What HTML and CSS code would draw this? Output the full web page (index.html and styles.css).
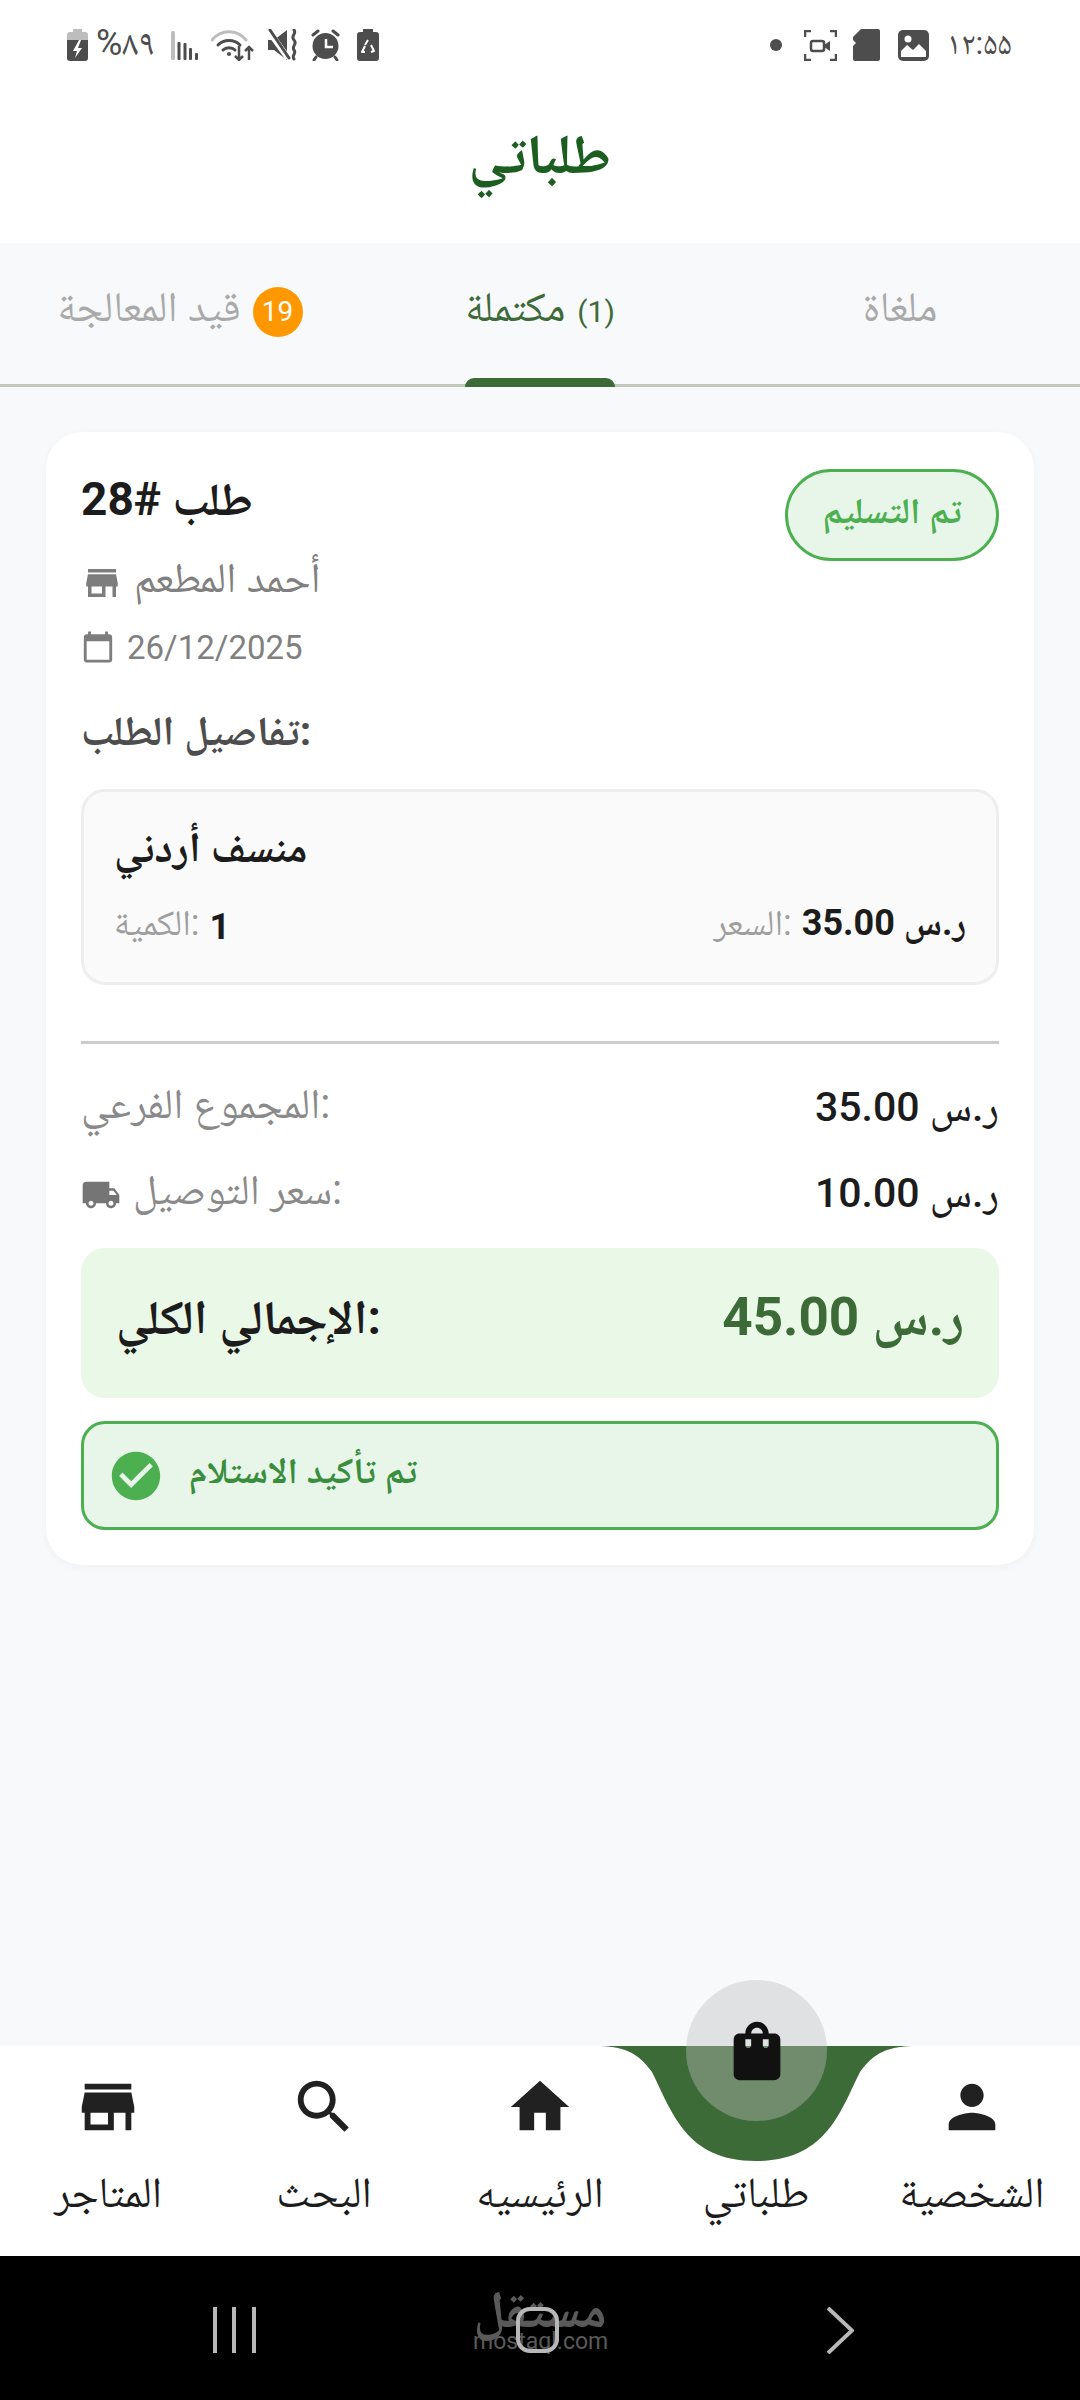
FILE: index.html
```html
<!DOCTYPE html>
<html lang="ar">
<head>
  <meta charset="utf-8">
  <title>طلباتي</title>
  <link rel="stylesheet" href="styles.css">
</head>
<body>
  <div class="page">
    <header class="top">
      <div class="status">
        <div class="status-group">
          <svg class="st-batt" viewBox="0 0 21 32"><path fill="#bdbdbd" d="M6 0h9v3h3a3 3 0 0 1 3 3v6H0V6a3 3 0 0 1 3-3h3z"/><path fill="#4d4d4d" d="M0 11h21v18a3 3 0 0 1-3 3H3a3 3 0 0 1-3-3z"/><path fill="#fff" d="M12 11l-6 11h4l-2 7 7-10h-4l3-8z"/></svg>
          <span class="st-pct">%۸۹</span>
          <svg class="st-signal" viewBox="0 0 27 29"><rect width="4" height="29" rx="1.500" fill="#bdbdbd"/><rect x="6.500" y="11" width="3" height="18" rx="1" fill="#4d4d4d"/><rect x="12.500" y="12" width="3" height="17" rx="1" fill="#4d4d4d"/><rect x="18" y="17" width="3" height="12" rx="1" fill="#4d4d4d"/><rect x="24" y="22" width="3" height="7" rx="1" fill="#4d4d4d"/></svg>
          <svg class="st-wifi" viewBox="0 0 44 32"><path fill="none" stroke="#bdbdbd" stroke-width="3" stroke-linecap="round" d="M1 11C10 0 26 0 35 11"/><path fill="none" stroke="#4d4d4d" stroke-width="3" stroke-linecap="round" d="M7 16c6-6 16-6 22 0M12 21c3-3 9-3 12 0"/><circle cx="18" cy="25" r="2" fill="#4d4d4d"/><path fill="none" stroke="#4d4d4d" stroke-width="2.500" d="M28 17v14M24 27l4 4 4-4M38 31V18M34 22l4-4 4 4"/></svg>
          <svg class="st-mute" viewBox="0 0 30 32"><path fill="#4d4d4d" d="M0 11h6L19 1v30L6 21H0z"/><path stroke="#fff" stroke-width="6" d="M0 1l20 28"/><path stroke="#4d4d4d" stroke-width="3" stroke-linecap="round" d="M2 1l19 28"/><path fill="none" stroke="#4d4d4d" stroke-width="3" stroke-linecap="round" d="M26 1c3 4-4 6 0 10s-3 6 0 10-3 5 0 9"/></svg>
          <svg class="st-alarm" viewBox="0 0 29 32"><circle cx="14.500" cy="17" r="13" fill="#4d4d4d"/><path fill="none" stroke="#fff" stroke-width="2.500" d="M15 10v8h7"/><path stroke="#4d4d4d" stroke-width="3" stroke-linecap="round" d="M2 6l5-4M27 6l-5-4M5 28l-2 3M24 28l2 3"/></svg>
          <svg class="st-saver" viewBox="0 0 22 32"><path fill="#4d4d4d" d="M6 0h10v3h3a3 3 0 0 1 3 3v23a3 3 0 0 1-3 3H3a3 3 0 0 1-3-3V6a3 3 0 0 1 3-3h3z"/><path fill="none" stroke="#fff" stroke-width="2" stroke-linejoin="round" d="M11 11l-3 5M14 16l3 6-3 1M8 23H5l3-6"/></svg>
        </div>
        <div class="status-group status-right">
          <span class="st-dot"></span>
          <svg class="st-frame" viewBox="0 0 33 31"><path fill="none" stroke="#4d4d4d" stroke-width="2.500" d="M1 7V1h6M26 1h6v6M1 24v6h6M26 30h6v-6"/><rect x="7" y="11" width="13" height="10" rx="2" fill="none" stroke="#4d4d4d" stroke-width="2.500"/><path fill="#4d4d4d" d="M20 15l6-4v10l-6-4z"/></svg>
          <svg class="st-sd" viewBox="0 0 27 32"><path fill="#4d4d4d" d="M8 0h17a2 2 0 0 1 2 2v28a2 2 0 0 1-2 2H2a2 2 0 0 1-2-2V17l3-3-3-3V8z"/></svg>
          <svg class="st-pic" viewBox="0 0 31 31"><rect width="31" height="31" rx="5" fill="#4d4d4d"/><circle cx="10" cy="9" r="3.500" fill="#fff"/><path fill="#fff" d="M3 27v-6l6-6 6 5 6-6 7 7v6z"/></svg>
          <span class="st-time">۱۲:۵۵</span>
        </div>
      </div>
      <h1 class="title">طلباتي</h1>
    </header>

    <nav class="tabs">
      <div class="tab">
        <span>قيد المعالجة</span>
        <span class="tab-badge">19</span>
      </div>
      <div class="tab tab-active">
        <span>مكتملة</span>
        <span class="tab-count">(1)</span>
      </div>
      <div class="tab">
        <span>ملغاة</span>
      </div>
    </nav>

    <main class="content">
      <section class="card">
        <div class="order-head">
          <div>
            <div class="order-no">28# طلب</div>
            <div class="meta meta-store">
              <svg class="icon-store" viewBox="0 0 24 24"><path d="M20 4H4v2h16V4zm1 10v-2l-1-5H4l-1 5v2h1v6h10v-6h4v6h2v-6h1zm-9 4H6v-4h6v4z"/></svg>
              <span>أحمد المطعم</span>
            </div>
            <div class="meta meta-date">
              <svg class="icon-date" viewBox="0 0 24 24"><path d="M20 3h-1V1h-2v2H7V1H5v2H4c-1.100 0-2 .9-2 2v16c0 1.100.9 2 2 2h16c1.100 0 2-.9 2-2V5c0-1.100-.9-2-2-2zm0 18H4V8h16v13z"/></svg>
              <span>26/12/2025</span>
            </div>
          </div>
          <div class="status-badge">تم التسليم</div>
        </div>

        <h2 class="details-title">تفاصيل الطلب:</h2>

        <div class="item">
          <div class="item-name">منسف أردني</div>
          <div class="item-row">
            <div class="item-cell">
              <span class="item-label">الكمية:</span>
              <span class="item-value">1</span>
            </div>
            <div class="item-cell">
              <span class="item-label">السعر:</span>
              <span class="item-value">35.00 ر.س</span>
            </div>
          </div>
        </div>

        <div class="divider"></div>

        <div class="sum-row">
          <span class="sum-label">المجموع الفرعي:</span>
          <span class="sum-value">35.00 ر.س</span>
        </div>
        <div class="sum-row sum-delivery">
          <span class="sum-label sum-with-icon">
            <svg class="icon-truck" viewBox="0 0 24 24"><path d="M20 8h-3V4H3c-1.100 0-2 .9-2 2v11h2c0 1.660 1.340 3 3 3s3-1.340 3-3h6c0 1.660 1.340 3 3 3s3-1.340 3-3h2v-5l-3-4zM6 18.500c-.83 0-1.500-.67-1.500-1.500s.67-1.500 1.500-1.500 1.500.67 1.500 1.500-.67 1.500-1.500 1.500zm13.500-9l1.960 2.500H17V9.500h2.500zm-1.500 9c-.83 0-1.500-.67-1.500-1.500s.67-1.500 1.500-1.500 1.500.67 1.500 1.500-.67 1.500-1.500 1.500z"/></svg>
            <span>سعر التوصيل:</span>
          </span>
          <span class="sum-value">10.00 ر.س</span>
        </div>

        <div class="total">
          <span class="total-label">الإجمالي الكلي:</span>
          <span class="total-value">45.00 ر.س</span>
        </div>

        <div class="confirm">
          <svg class="icon-check" viewBox="0 0 24 24"><path d="M12 2C6.480 2 2 6.480 2 12s4.480 10 10 10 10-4.480 10-10S17.520 2 12 2zm-2 15l-5-5 1.410-1.410L10 14.170l7.590-7.590L19 8l-9 9z"/></svg>
          <span>تم تأكيد الاستلام</span>
        </div>
      </section>
    </main>

    <footer class="bottom-nav">
      <div class="nav-item">
        <svg class="nav-icon" viewBox="0 0 24 24"><path d="M20 4H4v2h16V4zm1 10v-2l-1-5H4l-1 5v2h1v6h10v-6h4v6h2v-6h1zm-9 4H6v-4h6v4z"/></svg>
        <span class="nav-label">المتاجر</span>
      </div>
      <div class="nav-item">
        <svg class="nav-icon" viewBox="0 0 24 24"><path d="M15.500 14h-.79l-.28-.27C15.410 12.590 16 11.110 16 9.500 16 5.910 13.090 3 9.500 3S3 5.910 3 9.500 5.910 16 9.500 16c1.610 0 3.090-.59 4.230-1.570l.27.28v.79l5 4.990L20.490 19l-4.990-5zm-6 0C7.010 14 5 11.990 5 9.500S7.010 5 9.500 5 14 7.010 14 9.500 11.990 14 9.500 14z"/></svg>
        <span class="nav-label">البحث</span>
      </div>
      <div class="nav-item">
        <svg class="nav-icon" viewBox="0 0 24 24"><path d="M10 20v-6h4v6h5v-8h3L12 3 2 12h3v8z"/></svg>
        <span class="nav-label">الرئيسيه</span>
      </div>
      <div class="nav-item nav-active">
        <svg class="nav-curve" viewBox="0 0 320 115"><path d="M0 0C26 0 42 6 56 26C76 66 90 115 160 115C230 115 244 66 264 26C278 6 294 0 320 0Z"/></svg>
        <div class="nav-bubble">
          <svg class="nav-icon" viewBox="0 0 24 24"><path d="M18 6h-2c0-2.210-1.790-4-4-4S8 3.790 8 6H6c-1.100 0-2 .9-2 2v12c0 1.100.9 2 2 2h12c1.100 0 2-.9 2-2V8c0-1.100-.9-2-2-2zm-8 4c0 .55-.45 1-1 1s-1-.45-1-1V8h2v2zm2-6c1.100 0 2 .9 2 2h-4c0-1.100.9-2 2-2zm4 6c0 .55-.45 1-1 1s-1-.45-1-1V8h2v2z"/></svg>
        </div>
        <span class="nav-label">طلباتي</span>
      </div>
      <div class="nav-item">
        <svg class="nav-icon" viewBox="0 0 24 24"><path d="M12 12c2.210 0 4-1.790 4-4s-1.790-4-4-4-4 1.790-4 4 1.790 4 4 4zm0 2c-2.670 0-8 1.340-8 4v2h16v-2c0-2.660-5.330-4-8-4z"/></svg>
        <span class="nav-label">الشخصية</span>
      </div>
    </footer>

    <div class="system-bar">
      <div class="watermark">
        <div class="wm-ar">مستقل</div>
        <div class="wm-en">mostaql.com</div>
      </div>
      <div class="sys-cell">
        <svg class="sys-recents" viewBox="0 0 43 46"><path stroke="#b8b8b8" stroke-width="4" d="M2 0v46M21 0v46M41 0v46"/></svg>
      </div>
      <div class="sys-cell">
        <div class="sys-home"></div>
      </div>
      <div class="sys-cell">
        <svg class="sys-back" viewBox="0 0 27 47"><path fill="none" stroke="#b8b8b8" stroke-width="4" d="M1 1l24 22.500L1 46"/></svg>
      </div>
    </div>
  </div>
</body>
</html>
```

FILE: styles.css
```css
* {
  box-sizing: border-box;
}
body {
  margin: 0;
  font-family: Roboto, "Noto Naskh Arabic", sans-serif;
  background: #f7f9fb;
  color: #1c1c1c;
}
.page {
  width: 1080px;
  height: 2400px;
  display: flex;
  flex-direction: column;
  overflow: hidden;
}

/* status bar + title */
.top {
  background: #fff;
  height: 243px;
}
.status {
  height: 90px;
  padding: 0 68px 0 67px;
  display: flex;
  justify-content: space-between;
  align-items: center;
  color: #4d4d4d;
}
.status-group {
  display: flex;
  align-items: center;
  gap: 13px;
}
.status-right {
  gap: 18px;
}
.st-batt { width: 21px; height: 32px; }
.st-pct { font-size: 36px; margin: 5px 3px 0 -5px; }
.st-signal { width: 27px; height: 29px; }
.st-wifi { width: 44px; height: 32px; }
.st-mute { width: 30px; height: 32px; }
.st-alarm { width: 29px; height: 32px; }
.st-saver { width: 22px; height: 32px; margin-left: 4px; }
.st-dot {
  width: 12px;
  height: 12px;
  border-radius: 50%;
  background: #4d4d4d;
  margin-right: 4px;
}
.st-frame { width: 33px; height: 31px; margin-right: -2px; }
.st-sd { width: 27px; height: 32px; }
.st-pic { width: 31px; height: 31px; }
.st-time { font-size: 32px; margin-top: 3px; }
.title {
  margin: 0;
  text-align: center;
  font-size: 56px;
  line-height: 130px;
  font-weight: bold;
  color: #1b5e20;
}

/* tabs */
.tabs {
  height: 144px;
  display: grid;
  grid-template-columns: repeat(3, 1fr);
  border-bottom: 3px solid #c0c8bc;
}
.tab {
  position: relative;
  display: flex;
  align-items: center;
  justify-content: center;
  gap: 12px;
  font-size: 42px;
  color: #a9a9a9;
  padding-bottom: 4px;
}
.tab-active {
  color: #3c6b38;
}
.tab-active::after {
  content: "";
  position: absolute;
  left: 105px;
  right: 105px;
  bottom: -3px;
  height: 9px;
  background: #3c6b38;
  border-radius: 9px 9px 0 0;
}
.tab-badge {
  width: 50px;
  height: 50px;
  border-radius: 50%;
  background: #ff9800;
  color: #fff;
  font-size: 28px;
  display: flex;
  align-items: center;
  justify-content: center;
}
.tab-count {
  font-size: 30px;
}

/* order card */
.content {
  flex: 1;
  padding: 45px 46px 0;
}
.card {
  background: #fff;
  border-radius: 36px;
  padding: 37px 35px 35px;
  box-shadow: 0 2px 10px rgba(0,0,0,0.04);
}
.order-head {
  display: flex;
  justify-content: space-between;
  align-items: flex-start;
}
.order-no {
  font-size: 46px;
  line-height: 60px;
  font-weight: bold;
}
.meta {
  display: flex;
  align-items: center;
  color: #808080;
}
.meta svg {
  fill: #7d7d7d;
}
.meta-store {
  margin-top: 26px;
  height: 56px;
  font-size: 42px;
  gap: 11px;
}
.meta-date {
  margin-top: 13px;
  height: 46px;
  font-size: 33px;
  gap: 12px;
}
.icon-store { width: 42px; height: 42px; }
.icon-date { width: 34px; height: 34px; }
.status-badge {
  width: 214px;
  height: 92px;
  border: 3px solid #4caf50;
  border-radius: 46px;
  background: #e8f5e9;
  color: #4caf50;
  font-size: 36px;
  font-weight: bold;
  display: flex;
  align-items: center;
  justify-content: center;
}
.details-title {
  margin: 33px 0 0;
  font-size: 41px;
  line-height: 56px;
  font-weight: bold;
  color: #4d4d4d;
}

/* item */
.item {
  margin-top: 30px;
  background: #fafafa;
  border: 3px solid #eeeeee;
  border-radius: 24px;
  padding: 28px 30px 27px;
}
.item-name {
  font-size: 42px;
  line-height: 56px;
  font-weight: bold;
}
.item-row {
  margin-top: 23px;
  height: 56px;
  display: flex;
  justify-content: space-between;
  align-items: center;
}
.item-cell {
  display: flex;
  align-items: center;
  gap: 10px;
}
.item-label {
  font-size: 36px;
  color: #9e9e9e;
}
.item-value {
  font-size: 36px;
  font-weight: bold;
}

/* totals */
.divider {
  margin-top: 56px;
  height: 3px;
  background: #cccccc;
}
.sum-row {
  margin-top: 37px;
  height: 56px;
  display: flex;
  justify-content: space-between;
  align-items: center;
}
.sum-delivery {
  margin-top: 30px;
}
.sum-label {
  font-size: 42px;
  color: #8a8a8a;
}
.sum-with-icon {
  display: flex;
  align-items: center;
  gap: 12px;
}
.icon-truck {
  width: 40px;
  height: 40px;
  fill: #757575;
}
.sum-value {
  font-size: 41px;
  font-weight: 500;
  margin-top: 5px;
}
.total {
  margin-top: 25px;
  height: 150px;
  padding: 0 35px;
  background: #e9f8e7;
  border-radius: 24px;
  display: flex;
  justify-content: space-between;
  align-items: center;
}
.total-label {
  font-size: 48px;
  font-weight: bold;
}
.total-value {
  font-size: 53px;
  font-weight: bold;
  color: #3c6b38;
}
.confirm {
  margin-top: 23px;
  height: 109px;
  padding: 0 23px;
  border: 3px solid #4caf50;
  border-radius: 24px;
  background: #e8f5e9;
  display: flex;
  align-items: center;
  gap: 24px;
  font-size: 36px;
  font-weight: bold;
  color: #388e3c;
}
.icon-check {
  width: 58px;
  height: 58px;
  fill: #4caf50;
}

/* bottom nav */
.bottom-nav {
  height: 210px;
  background: #fff;
  display: grid;
  grid-template-columns: repeat(5, 1fr);
}
.nav-item {
  position: relative;
  display: flex;
  flex-direction: column;
  align-items: center;
  padding-top: 26px;
}
.nav-icon {
  display: block;
  width: 70px;
  height: 70px;
  fill: #212121;
}
.nav-label {
  margin-top: 25px;
  font-size: 43px;
  line-height: 50px;
  white-space: nowrap;
}
.nav-active .nav-label {
  margin-top: 95px;
}
.nav-curve {
  position: absolute;
  left: -52px;
  top: 0;
  width: 320px;
  height: 115px;
  fill: #3c6b38;
}
.nav-bubble {
  position: absolute;
  top: -66px;
  left: 38px;
  width: 141px;
  height: 141px;
  border-radius: 50%;
  background: rgba(190,190,190,0.4);
  display: flex;
  align-items: center;
  justify-content: center;
}
.nav-bubble .nav-icon {
  fill: #111;
}

/* android buttons */
.system-bar {
  position: relative;
  height: 144px;
  background: #000;
  display: flex;
  justify-content: center;
  align-items: center;
  padding: 4px 6px 0 0;
}
.sys-cell {
  position: relative;
  width: 303px;
  display: flex;
  justify-content: center;
}
.sys-recents { width: 43px; height: 46px; }
.sys-home {
  width: 43px;
  height: 46px;
  border: 4px solid #b8b8b8;
  border-radius: 14px;
}
.sys-back { width: 27px; height: 47px; }
.watermark {
  position: absolute;
  top: 31px;
  left: 473px;
  width: 134px;
  text-align: center;
  color: #5a5a5a;
}
.wm-ar {
  font-size: 52px;
  line-height: 46px;
  font-weight: bold;
}
.wm-en {
  font-size: 23px;
  line-height: 18px;
}
```
